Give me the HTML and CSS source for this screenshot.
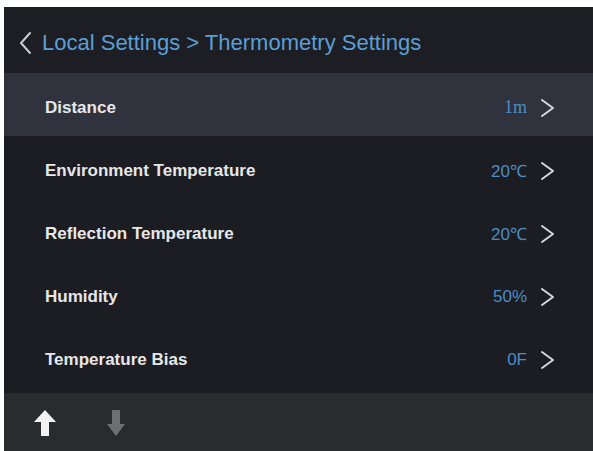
FILE: index.html
```html
<!DOCTYPE html>
<html lang="en">
<head>
    <meta charset="UTF-8">
    <meta name="viewport" content="width=device-width, initial-scale=1.0">
    <title>Thermometry Settings</title>
    <link rel="stylesheet" href="styles.css">
</head>
<body>
    <div class="screen">
        <div class="header">
            <svg class="back" width="14" height="24" viewBox="0 0 14 24">
                <path d="M12 2 L3 12 L12 22" fill="none" stroke="#c9ccd2" stroke-width="2" stroke-linecap="round" stroke-linejoin="round"/>
            </svg>
            <h1>Local Settings &gt; Thermometry Settings</h1>
        </div>
        <div class="list">
            <div class="row active">
                <span class="label">Distance</span>
                <span class="value serif">1m</span>
                <svg class="chevron" width="15" height="20" viewBox="0 0 15 20"><path d="M2 2 L13 10 L2 18" fill="none" stroke="#d6d8dc" stroke-width="2" stroke-linecap="round" stroke-linejoin="round"/></svg>
            </div>
            <div class="row">
                <span class="label">Environment Temperature</span>
                <span class="value">20℃</span>
                <svg class="chevron" width="15" height="20" viewBox="0 0 15 20"><path d="M2 2 L13 10 L2 18" fill="none" stroke="#d6d8dc" stroke-width="2" stroke-linecap="round" stroke-linejoin="round"/></svg>
            </div>
            <div class="row">
                <span class="label">Reflection Temperature</span>
                <span class="value">20℃</span>
                <svg class="chevron" width="15" height="20" viewBox="0 0 15 20"><path d="M2 2 L13 10 L2 18" fill="none" stroke="#d6d8dc" stroke-width="2" stroke-linecap="round" stroke-linejoin="round"/></svg>
            </div>
            <div class="row">
                <span class="label">Humidity</span>
                <span class="value">50%</span>
                <svg class="chevron" width="15" height="20" viewBox="0 0 15 20"><path d="M2 2 L13 10 L2 18" fill="none" stroke="#d6d8dc" stroke-width="2" stroke-linecap="round" stroke-linejoin="round"/></svg>
            </div>
            <div class="row">
                <span class="label">Temperature Bias</span>
                <span class="value">0F</span>
                <svg class="chevron" width="15" height="20" viewBox="0 0 15 20"><path d="M2 2 L13 10 L2 18" fill="none" stroke="#d6d8dc" stroke-width="2" stroke-linecap="round" stroke-linejoin="round"/></svg>
            </div>
        </div>
        <div class="footer">
            <svg class="arrow" width="24" height="28" viewBox="0 0 24 28"><path d="M12 1 L23 13 L16 13 L16 27 L8 27 L8 13 L1 13 Z" fill="#f2f2f2"/></svg>
            <svg class="arrow" width="20" height="28" viewBox="0 0 20 28"><path d="M6 1 L14 1 L14 15 L19 15 L10 27 L1 15 L6 15 Z" fill="#6e6f72"/></svg>
        </div>
    </div>
</body>
</html>
```

FILE: styles.css
```css
body {
    margin: 0;
    padding: 0;
    background: #fff;
    font-family: 'Liberation Sans', Arial, sans-serif;
}
.screen {
    margin: 7px 0 0 4px;
    height: 444px;
    background: #1b1d22;
    display: flex;
    flex-direction: column;
}
.header {
    height: 66px;
    box-sizing: border-box;
    padding: 5px 0 0 14px;
    display: flex;
    align-items: center;
    background: #1c1e23;
}
.header h1 {
    margin: 0 0 0 10px;
    font-size: 22px;
    font-weight: normal;
    color: #5b9fd6;
}
.list {
    display: flex;
    flex-direction: column;
    padding-bottom: 5px;
}
.row {
    height: 63px;
    box-sizing: border-box;
    padding: 6px 38px 0 41px;
    display: flex;
    align-items: center;
}
.row.active {
    background: #30333d;
}
.label {
    flex: 1;
    font-size: 17px;
    font-weight: bold;
    color: #e6e7e9;
}
.value {
    font-size: 17px;
    color: #4d8cc4;
    margin-right: 13px;
}
.value.serif {
    font-family: 'Liberation Serif', serif;
    font-size: 18px;
}
.footer {
    flex: 1;
    display: flex;
    align-items: center;
    gap: 49px;
    padding: 2px 0 0 29px;
    background: #2a2b2f;
}
```
